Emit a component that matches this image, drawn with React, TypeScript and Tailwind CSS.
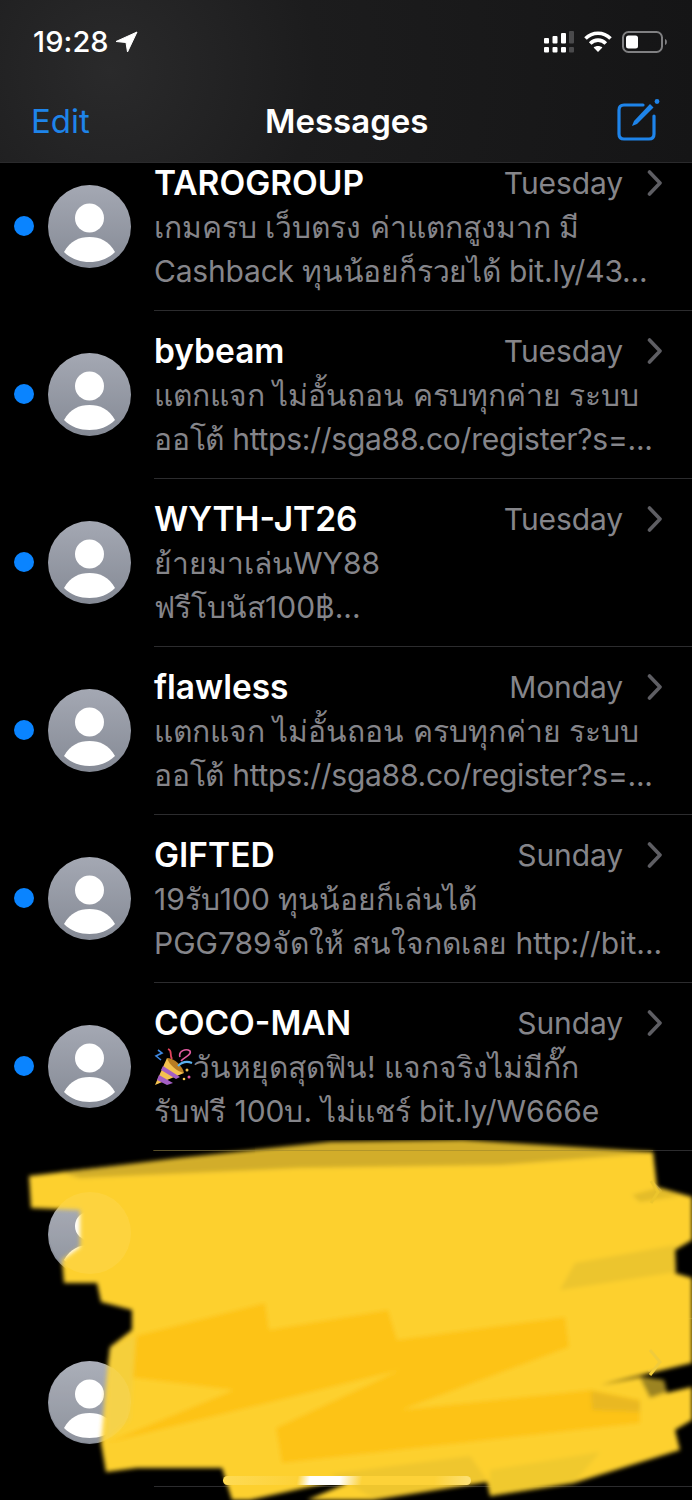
const FONT = "font-['Inter','Noto_Sans','Liberation_Sans','Noto_Sans_CJK_SC',sans-serif]";

type Row = { name: string; time: string; l1: string; l2: string; l2Class?: string; emoji?: boolean };
const rows: Row[] = [
  { name: "TAROGROUP", time: "Tuesday", l1: "เกมครบ เว็บตรง ค่าแตกสูงมาก มี", l2: "Cashback ทุนน้อยก็รวยได้ bit.ly/43...", l2Class: "tracking-[-0.2px]" },
  { name: "bybeam", time: "Tuesday", l1: "แตกแจก ไม่อั้นถอน ครบทุกค่าย ระบบ", l2: "ออโต้ https://sga88.co/register?s=...", l2Class: "tracking-[-0.25px]" },
  { name: "WYTH-JT26", time: "Tuesday", l1: "ย้ายมาเล่นWY88", l2: "ฟรีโบนัส100฿..." },
  { name: "flawless", time: "Monday", l1: "แตกแจก ไม่อั้นถอน ครบทุกค่าย ระบบ", l2: "ออโต้ https://sga88.co/register?s=...", l2Class: "tracking-[-0.25px]" },
  { name: "GIFTED", time: "Sunday", l1: "19รับ100 ทุนน้อยก็เล่นได้", l2: "PGG789จัดให้ สนใจกดเลย http://bit..." },
  { name: "COCO-MAN", time: "Sunday", l1: "วันหยุดสุดฟิน! แจกจริงไม่มีกั๊ก", l2: "รับฟรี 100บ. ไม่แชร์ bit.ly/W666e", emoji: true },
  { name: "", time: "", l1: "", l2: "" },
  { name: "", time: "", l1: "", l2: "" },
];

function Avatar() {
  return (
    <svg width="83" height="83" viewBox="0 0 83 83" className="shrink-0">
      <defs>
        <linearGradient id="av" x1="0" y1="0" x2="0" y2="1">
          <stop offset="0" stopColor="#a4a8b3" />
          <stop offset="1" stopColor="#858a95" />
        </linearGradient>
      </defs>
      <circle cx="41.5" cy="41.5" r="41.5" fill="url(#av)" />
      <circle cx="41.5" cy="33" r="14.5" fill="#fff" />
      <path d="M16 67 C22 56 31 52 41.5 52 C52 52 61 56 67 67 C60 74 51 77 41.5 77 C32 77 23 74 16 67 Z" fill="#fff" />
    </svg>
  );
}

function Popper() {
  return (
    <svg width="39" height="39" viewBox="0 0 39 39" className="-my-[2px] shrink-0">
      <path d="M1 37 L13 10 L30 25 Z" fill="#f4c24f" />
      <path d="M5 27 L19 35 L13 37 L3 32 Z" fill="#a35ec4" />
      <path d="M9 18 L26 29 L22 31 L7 22 Z" fill="#a35ec4" />
      <path d="M13 10 C19 9 29 18 30 25 C24 24 15 17 13 10 Z" fill="#b87d22" />
      <path d="M24 18 C28 14 33 13 38 15" stroke="#5ab0ee" strokeWidth="2.2" fill="none" />
      <path d="M14 1 C19 3 15 6 18 11" stroke="#e0435c" strokeWidth="1.8" fill="none" />
      <path d="M26 9 C24 3 32 0 36 3 C38 7 30 9 27 13" stroke="#e05aa0" strokeWidth="1.6" fill="none" />
      <path d="M4 2 L8 5 L2 8 L7 12" stroke="#3d87e0" strokeWidth="1.6" fill="none" />
      <circle cx="33" cy="22" r="1.5" fill="#f4c24f" />
      <circle cx="35" cy="29" r="1.5" fill="#e05aa0" />
      <circle cx="30" cy="31" r="1.3" fill="#f4c24f" />
    </svg>
  );
}

function Chevron() {
  return (
    <svg width="16" height="26" viewBox="0 0 16 26" fill="none" className="shrink-0">
      <path d="M2.5 2 L13 13 L2.5 24" stroke="#5e5e63" strokeWidth="3.6" strokeLinecap="round" strokeLinejoin="round" />
    </svg>
  );
}

function MessageRow({ r }: { r: Row }) {
  return (
    <div className="flex h-[168px] items-center">
      <div className="flex w-[48px] shrink-0 justify-start pl-[14px]">
        <div className={r.name ? "h-[20px] w-[20px] rounded-full bg-[#0a84ff]" : "h-[20px] w-[20px]"} />
      </div>
      <Avatar />
      <div className="ml-[23px] flex h-[169px] min-w-0 flex-1 flex-col self-start border-b border-[#2c2c2e] pr-[29px] pt-[19px]">
        <div className="flex h-[44px] items-center justify-between">
          <span className="text-[33.5px] font-semibold leading-[44px] text-white">{r.name}</span>
          <span className="flex items-center gap-[24px]">
            <span className="text-[30px] leading-[44px] tracking-[-0.1px] text-[#85858a]">{r.time}</span>
            <Chevron />
          </span>
        </div>
        <div className="flex h-[44px] items-center whitespace-nowrap text-[30px] leading-[44px] text-[#85858a]">
          {r.emoji && <Popper />}
          {r.l1}
        </div>
        <div className={`h-[44px] whitespace-nowrap text-[30px] leading-[44px] text-[#85858a] ${r.l2Class ?? ""}`}>{r.l2}</div>
      </div>
    </div>
  );
}

function Scribble() {
  return (
    <svg width="692" height="360" viewBox="0 1140 692 360" className="absolute left-0 top-[1140px]">
      <defs>
        <filter id="b" x="-5%" y="-5%" width="110%" height="110%">
          <feGaussianBlur stdDeviation="2.2" />
        </filter>
      </defs>
      <g filter="url(#b)">
        <path d="M29 1176 L180 1158 L330 1142 L463 1140 L653 1152 L657 1187 L692 1197 L692 1240 L675 1250 L675 1273 L692 1278 L692 1363 L600 1385 L640 1377 L662 1380 L666 1393 L692 1387 L692 1420 L675 1430 L680 1450 L574 1483 L490 1496 L487 1482 L373 1500 L307 1500 L372 1473 L250 1500 L232 1500 L222 1468 L137 1468 L106 1472 L101 1443 L108 1363 L110 1347 L132 1330 L132 1310 L101 1302 L97 1283 L64 1283 L62 1260 L80 1247 L80 1210 L31 1208 Z" fill="#fdd02f" />
        <path d="M60 1172 L330 1143 L463 1141 L653 1153 L500 1165 L300 1168 L80 1178 Z" fill="#d2ad2c" />
        <path d="M132 1337 L265 1303 L269 1330 L388 1310 L397 1340 L565 1317 L569 1347 L401 1410 L591 1390 L640 1400 L640 1423 L282 1463 L276 1428 L400 1370 L106 1443 L234 1390 L128 1377 Z" fill="#fdc316" />
        <path d="M591 1391 L640 1401 L640 1412 L592 1410 Z" fill="#e9b820" />
        <path d="M640 1378 L664 1380 L667 1392 L650 1398 Z" fill="#9c8420" />
        <path d="M632 1195 L657 1188 L680 1196 L640 1202 Z" fill="#e3bc2b" />
        <path d="M575 1263 L675 1245 L676 1272 L560 1290 Z" fill="#ecc52d" />
        <path d="M490 1470 L600 1452 L574 1483 L490 1496 Z" fill="#f0c92e" />
        <path d="M330 1474 L470 1456 L487 1480 L373 1498 Z" fill="#efc62d" />
        <path d="M110 1348 L136 1335 L130 1420 L106 1440 Z" fill="#f5cf3a" />
      </g>
      <path d="M153 1150.5 H653" stroke="#8f7a28" strokeOpacity="0.45" />
      <path d="M651 1181 L658 1192 L651 1203" stroke="#ecc52d" strokeWidth="3" fill="none" />
      <path d="M650 1350 L660 1362 L650 1375" stroke="#f0cb3c" strokeWidth="3" fill="none" />
      <circle cx="90" cy="1233" r="41" fill="#ffffff" fillOpacity="0.08" />
      <circle cx="90" cy="1402" r="41" fill="#ffffff" fillOpacity="0.08" />
    </svg>
  );
}

export default function App() {
  return (
    <div className={`relative h-[1500px] w-[692px] overflow-hidden bg-black ${FONT}`}>
      <header className="relative z-10 h-[163px] border-b border-[#2a2a2c] bg-[radial-gradient(circle_at_110px_70px,#2a2a2b_0%,#1c1c1d_35%,#151516_100%)]">
        <div className="flex h-[84px] items-center justify-between pl-[33px] pr-[24px]">
          <div className="flex items-center gap-[6px]">
            <span className="text-[29px] font-medium tracking-[0.1px] text-white">19:28</span>
            <svg width="23" height="22" viewBox="0 0 23 22">
              <path d="M22 1 L12.5 21 L11 11.5 L1 10.5 Z" fill="#fff" stroke="#fff" strokeLinejoin="round" />
            </svg>
          </div>
          <div className="flex items-center gap-[10px]">
            <svg width="30" height="22" viewBox="0 0 30 22" fill="#fff">
              <rect x="0" y="7" width="5" height="5.5" rx="1" />
              <rect x="0" y="16" width="5" height="5.5" rx="1" />
              <rect x="8.5" y="5" width="5" height="7.5" rx="1" />
              <rect x="8.5" y="16" width="5" height="5.5" rx="1" />
              <rect x="17" y="2" width="5" height="10.5" rx="1" />
              <rect x="17" y="16" width="5" height="5.5" rx="1" />
              <rect x="25" y="0" width="5" height="12.5" rx="1" fill="#4a4a4c" />
              <rect x="25" y="16" width="5" height="5.5" rx="1" fill="#4a4a4c" />
            </svg>
            <svg width="28" height="22" viewBox="0 0 28 22" fill="none" stroke="#fff" strokeWidth="3.6">
              <path d="M1.5 7.5 C8.5 0.5 19.5 0.5 26.5 7.5" />
              <path d="M6.2 12.5 C10.5 8 17.5 8 21.8 12.5" />
              <path d="M14 21 L9.6 16.6 C12 14.6 16 14.6 18.4 16.6 Z" fill="#fff" stroke="none" />
            </svg>
            <svg width="46" height="22" viewBox="0 0 46 22" fill="none">
              <rect x="1" y="1" width="39" height="20" rx="5.5" stroke="#808082" strokeWidth="2" />
              <rect x="4" y="4.5" width="12" height="13" rx="2.5" fill="#fff" />
              <path d="M43 8 C45.5 8.5 45.5 13.5 43 14 Z" fill="#808082" />
            </svg>
          </div>
        </div>
        <div className="relative flex h-[78px] items-center justify-between pl-[31px] pr-[30px]">
          <span className="pb-[4px] text-[33px] leading-[44px] text-[#1e84ea]">Edit</span>
          <span className="absolute left-[265px] top-[15px] text-[33px] font-semibold leading-[44px] text-white">Messages</span>
          <svg width="46" height="46" viewBox="0 0 46 46" fill="none" className="mb-[4px]">
            <path d="M27 7 H8 Q3 7 3 12 V36 Q3 41 8 41 H33 Q38 41 38 36 V18" stroke="#1e84ea" strokeWidth="3.2" strokeLinecap="round" />
            <path d="M16 28 L18 23 L34 6 L37.5 9.5 L21 26 Z" fill="#1e84ea" />
            <circle cx="41" cy="3.5" r="2.4" fill="#1e84ea" />
          </svg>
        </div>
      </header>
      <main className="-mt-[21px]">
        {rows.map((r, i) => (
          <MessageRow key={i} r={r} />
        ))}
      </main>
      <Scribble />
      <div className="absolute left-[223px] top-[1476px] h-[9px] w-[248px] rounded-full bg-[linear-gradient(100deg,#fedb55_0%,#fdd238_30%,#fff_35%,#fff_47%,#fdd238_56%,#fdd238_85%,#fde27a_100%)]" />
    </div>
  );
}
